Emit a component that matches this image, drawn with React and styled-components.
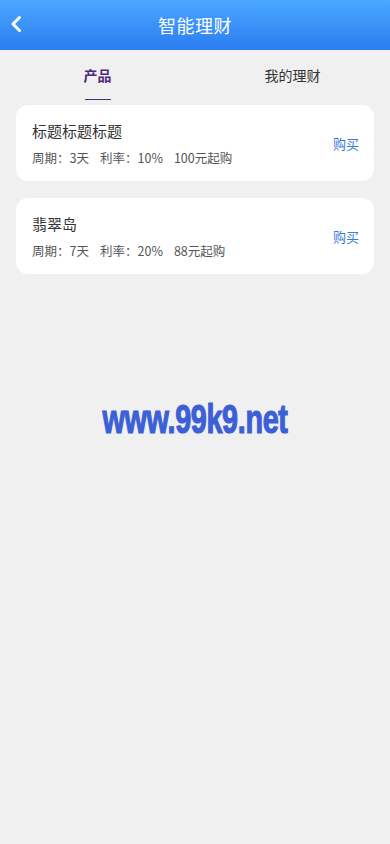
import React from 'react';
import styled, { createGlobalStyle } from 'styled-components';

const GlobalStyle = createGlobalStyle`
  html, body {
    margin: 0;
    padding: 0;
    background: #f0f0f0;
    font-family: "Noto Sans CJK SC", "Liberation Sans", sans-serif;
  }
`;

const products = [
  { title: '标题标题标题', days: 3, rate: '10%', min: '100元起购' },
  { title: '翡翠岛', days: 7, rate: '20%', min: '88元起购' },
];

export default function App() {
  return (
    <Page>
      <GlobalStyle />
      <Header>
        <Back aria-label="back">
          <svg width="14" height="18" viewBox="0 0 14 18">
            <path d="M10.5 2.5 L4 9 L10.5 15.5" fill="none" stroke="#fff" strokeWidth="3" strokeLinecap="round" strokeLinejoin="round" />
          </svg>
        </Back>
        <Title>智能理财</Title>
      </Header>

      {/* Tabs */}
      <Tabs>
        <Tab active>产品</Tab>
        <Tab>我的理财</Tab>
      </Tabs>

      <List>
        {products.map((p) => (
          <Card key={p.title}>
            <Info>
              <CardTitle>{p.title}</CardTitle>
              <Meta>
                <span>周期：{p.days}天</span>
                <span>利率：{p.rate}</span>
                <span>{p.min}</span>
              </Meta>
            </Info>
            <Buy>购买</Buy>
          </Card>
        ))}
      </List>

      <Watermark>www.99k9.net</Watermark>
    </Page>
  );
}

const Page = styled.div`
  min-height: 844px;
  background: #f0f0f0;
`;

// Header bar
const Header = styled.div`
  height: 50px;
  background: linear-gradient(180deg, #4aa8ff 0%, #2c7cf0 100%);
  display: flex;
  align-items: center;
  justify-content: center;
  position: relative;
`;

const Back = styled.div`
  position: absolute;
  left: 9px;
  top: 15px;
  display: flex;
`;

const Title = styled.h1`
  margin: 0;
  color: #fff;
  font-size: 18px;
  font-weight: 400;
  letter-spacing: 0.5px;
`;

const Tabs = styled.div`
  display: grid;
  grid-template-columns: 1fr 1fr;
  height: 50px;
`;

const Tab = styled.div`
  position: relative;
  display: flex;
  align-items: center;
  justify-content: center;
  font-size: 14px;
  color: ${p => (p.active ? '#4b2a7c' : '#333')};
  font-weight: ${p => (p.active ? 700 : 400)};
  &::after {
    content: '';
    display: ${p => (p.active ? 'block' : 'none')};
    position: absolute;
    bottom: 0;
    left: 50%;
    width: 26px;
    margin-left: -13px;
    height: 1px;
    background: #4b2a7c;
  }
`;

const List = styled.div`
  display: flex;
  flex-direction: column;
  gap: 17px;
  padding: 5px 16px 0;
`;

const Card = styled.div`
  background: #fff;
  border-radius: 12px;
  height: 76px;
  box-sizing: border-box;
  padding: 0 16px;
  display: flex;
  align-items: center;
  justify-content: space-between;
`;

const Info = styled.div`
  display: flex;
  flex-direction: column;
  gap: 9px;
  margin-top: 1px;
`;

const CardTitle = styled.div`
  font-size: 15px;
  color: #333;
  line-height: 20px;
`;

const Meta = styled.div`
  display: flex;
  gap: 11px;
  font-size: 12.5px;
  color: #555;
  line-height: 16px;
`;

const Buy = styled.div`
  font-size: 13px;
  color: #3a7bdc;
  margin-right: -1px;
`;

const Watermark = styled.div`
  margin-top: 122px;
  text-align: center;
  font-family: "Liberation Sans Narrow", "Liberation Sans", sans-serif;
  font-weight: 700;
  font-size: 40px;
  line-height: 46px;
  color: #3b5fd6;
  -webkit-text-stroke: 1.2px #3b5fd6;
  transform: scaleX(0.72);
  letter-spacing: -0.5px;
`;
